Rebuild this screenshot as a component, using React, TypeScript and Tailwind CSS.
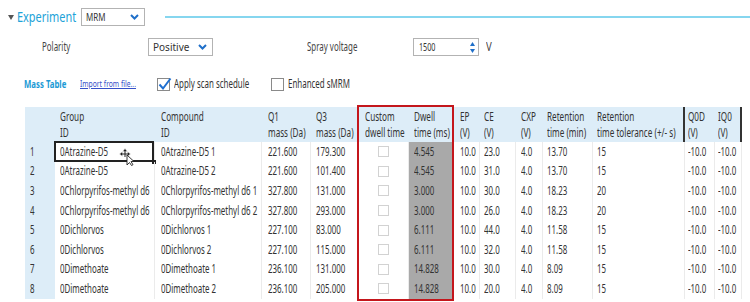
import React from "react";

const FONT = "font-['Noto_Sans','Open_Sans','Liberation_Sans',sans-serif]";

function T({ children, s = "scale-x-[0.66]", className = "" }: { children: React.ReactNode; s?: string; className?: string }) {
  return <span className={`inline-block origin-left whitespace-nowrap ${s} ${className}`}>{children}</span>;
}

function Chevron() {
  return (
    <svg width="9" height="6" viewBox="0 0 9 6" className="shrink-0">
      <path d="M1 1 L4.5 4.5 L8 1" fill="none" stroke="#1f6fc9" strokeWidth="2" />
    </svg>
  );
}

function Select({ children, w }: { children: React.ReactNode; w: string }) {
  return (
    <div className={`${w} shrink-0 h-[18px] border border-[#b3b3b3] bg-white flex items-center justify-between pl-[4px] pr-[5px] text-[10px] text-[#333]`}>
      {children}
      <Chevron />
    </div>
  );
}

function CheckBox({ checked }: { checked?: boolean }) {
  return (
    <div className="relative w-[13px] h-[13px] border border-[#8a8a8a] bg-white shrink-0">
      {checked && (
        <svg width="16" height="16" viewBox="0 0 16 16" className="absolute -left-[1px] -top-[3px]">
          <path d="M2.5 8.5 L6 12.5 L13.5 2.5" fill="none" stroke="#1f6fd0" strokeWidth="2" />
        </svg>
      )}
    </div>
  );
}

type Col = { w: string; h: [string, string]; pl: string; dark?: boolean };

const cols: Col[] = [
  { w: "w-[30px]", h: ["", ""], pl: "pl-[5px]" },
  { w: "w-[100px]", h: ["Group", "ID"], pl: "pl-[5px]" },
  { w: "w-[107px]", h: ["Compound", "ID"], pl: "pl-[6px]" },
  { w: "w-[49px]", h: ["Q1", "mass (Da)"], pl: "pl-[6px]" },
  { w: "w-[47px]", h: ["Q3", "mass (Da)"], pl: "pl-[5px]" },
  { w: "w-[51px]", h: ["Custom", "dwell time"], pl: "pl-[7px]" },
  { w: "w-[44px]", h: ["Dwell", "time (ms)"], pl: "pl-[5px]" },
  { w: "w-[27px]", h: ["EP", "(V)"], pl: "pl-[7px]" },
  { w: "w-[36px]", h: ["CE", "(V)"], pl: "pl-[4px]" },
  { w: "w-[27px]", h: ["CXP", "(V)"], pl: "pl-[5px]" },
  { w: "w-[50px]", h: ["Retention", "time (min)"], pl: "pl-[4px]" },
  { w: "w-[92px]", h: ["Retention", "time tolerance (+/- s)"], pl: "pl-[4px]", dark: true },
  { w: "w-[30px]", h: ["Q0D", "(V)"], pl: "pl-[3px]" },
  { w: "w-[27px]", h: ["IQ0", "(V)"], pl: "pl-[3px]", dark: true },
];

const rows: string[][] = [
  ["1", "0Atrazine-D5", "0Atrazine-D5 1", "221.600", "179.300", "", "4.545", "10.0", "23.0", "4.0", "13.70", "15", "-10.0", "-10.0"],
  ["2", "0Atrazine-D5", "0Atrazine-D5 2", "221.600", "101.400", "", "4.545", "10.0", "31.0", "4.0", "13.70", "15", "-10.0", "-10.0"],
  ["3", "0Chlorpyrifos-methyl d6", "0Chlorpyrifos-methyl d6 1", "327.800", "131.000", "", "3.000", "10.0", "30.0", "4.0", "18.23", "20", "-10.0", "-10.0"],
  ["4", "0Chlorpyrifos-methyl d6", "0Chlorpyrifos-methyl d6 2", "327.800", "293.000", "", "3.000", "10.0", "26.0", "4.0", "18.23", "20", "-10.0", "-10.0"],
  ["5", "0Dichlorvos", "0Dichlorvos 1", "227.100", "83.000", "", "6.111", "10.0", "44.0", "4.0", "11.58", "15", "-10.0", "-10.0"],
  ["6", "0Dichlorvos", "0Dichlorvos 2", "227.100", "115.000", "", "6.111", "10.0", "32.0", "4.0", "11.58", "15", "-10.0", "-10.0"],
  ["7", "0Dimethoate", "0Dimethoate 1", "236.100", "131.000", "", "14.828", "10.0", "30.0", "4.0", "8.09", "15", "-10.0", "-10.0"],
  ["8", "0Dimethoate", "0Dimethoate 2", "236.100", "205.000", "", "14.828", "10.0", "20.0", "4.0", "8.09", "15", "-10.0", "-10.0"],
];

function MoveCursor() {
  return (
    <svg width="18" height="18" viewBox="0 0 18 18" className="absolute left-[64px] top-[6px]">
      <g fill="#222" stroke="#fff" strokeWidth="0.6">
        <path d="M6 0.5 L8.5 3.5 L3.5 3.5 Z" />
        <path d="M0.5 6 L3.5 3.5 L3.5 8.5 Z" />
        <path d="M11.5 6 L8.5 3.5 L8.5 8.5 Z" />
      </g>
      <path d="M6 3 L6 9 M3 6 L9 6" stroke="#222" strokeWidth="1" />
      <path d="M8 7 L8 17 L10.5 14.5 L12.5 17.5 L14 16.7 L12 13.6 L15 13.5 Z" fill="#fff" stroke="#222" strokeWidth="0.9" />
    </svg>
  );
}

export default function App() {
  return (
    <div className={`relative w-[750px] h-[302px] overflow-hidden bg-white text-[#333] ${FONT}`}>
      {/* Experiment row */}
      <div className="flex items-center h-[18px] mt-[8px]">
        <svg width="6" height="5" viewBox="0 0 6 5" className="ml-[8px] shrink-0">
          <path d="M0 0 L6 0 L3 5 Z" fill="#555" />
        </svg>
        <div className="ml-[3px] w-[64px] shrink-0 text-[14px] leading-none text-[#20a2d8]">
          <T s="scale-x-[0.78]">Experiment</T>
        </div>
        <Select w="w-[64px]">
          <T s="scale-x-[0.8]">MRM</T>
        </Select>
        <div className="ml-[20px] flex-1 h-[2px] bg-[#86d6ef]" />
      </div>

      {/* Polarity row */}
      <div className="flex items-center h-[18px] mt-[12px] text-[12px] text-[#444]">
        <div className="ml-[42px] w-[106px] shrink-0">
          <T>Polarity</T>
        </div>
        <Select w="w-[65px]">
          <span>Positive</span>
        </Select>
        <div className="ml-[94px] w-[106px] shrink-0">
          <T>Spray voltage</T>
        </div>
        <div className="w-[66px] shrink-0 h-[18px] border border-[#b3b3b3] flex items-center justify-between pl-[5px] pr-[3px] text-[10px] text-[#333]">
          <T s="scale-x-[0.72]">1500</T>
          <div className="flex flex-col gap-[3px]">
            <svg width="5" height="4" viewBox="0 0 5 4"><path d="M0 4 L2.5 0 L5 4 Z" fill="#1f6fc9" /></svg>
            <svg width="5" height="4" viewBox="0 0 5 4"><path d="M0 0 L2.5 4 L5 0 Z" fill="#1f6fc9" /></svg>
          </div>
        </div>
        <div className="ml-[7px]">
          <T s="scale-x-[0.8]">V</T>
        </div>
      </div>

      {/* Mass table row */}
      <div className="flex items-center h-[14px] mt-[21px]">
        <div className="ml-[24px] w-[56px] shrink-0 text-[10px] font-bold text-[#1b9ad5]">
          <T s="scale-x-[0.78]">Mass Table</T>
        </div>
        <div className="w-[77px] shrink-0 text-[9px] text-[#3650c9]">
          <T s="scale-x-[0.75]" className="underline">Import from file...</T>
        </div>
        <CheckBox checked />
        <div className="ml-[4px] w-[97px] shrink-0 text-[12px] text-[#333]">
          <T>Apply scan schedule</T>
        </div>
        <CheckBox />
        <div className="ml-[4px] text-[12px] text-[#333]">
          <T>Enhanced sMRM</T>
        </div>
      </div>

      {/* Table */}
      <div className="ml-[25px] mt-[16px] w-[717px] text-[12px]">
        <div className="flex h-[35px] bg-[#ddedf8]">
          {cols.map((c, i) => (
            <div
              key={i}
              className={`${c.w} ${c.pl} shrink-0 pt-[2px] leading-[16px] ${c.dark ? "border-r-2 border-[#333]" : ""}`}
            >
              <div className="h-[16px]"><T s="scale-x-[0.68]">{c.h[0]}</T></div>
              <div className="h-[16px]"><T s="scale-x-[0.68]">{c.h[1]}</T></div>
            </div>
          ))}
        </div>
        {rows.map((r, ri) => (
          <div key={ri} className="flex h-[19.6px]">
            {r.map((v, ci) => {
              const c = cols[ci];
              let cls = `${c.w} ${c.pl} shrink-0 flex items-center relative`;
              if (ci === 0) cls += " bg-[#ddedf8]";
              else if (ci === 6) cls += " bg-[#a9a9a9]";
              else cls += " border-r border-[#ebebeb]";
              return (
                <div key={ci} className={cls}>
                  {ci === 5 ? (
                    <div className="w-full flex justify-center pr-[7px]">
                      <div className="w-[11px] h-[11px] border border-[#d2d2d2] bg-white" />
                    </div>
                  ) : (
                    <T>{v}</T>
                  )}
                  {ri === 0 && ci === 1 && (
                    <>
                      <div className="absolute -left-[1px] -top-[1px] right-0 bottom-0 border-2 border-[#222]" />
                      <div className="absolute -right-[2px] -bottom-[2px] w-[4px] h-[4px] bg-[#222]" />
                      <MoveCursor />
                    </>
                  )}
                </div>
              );
            })}
          </div>
        ))}
      </div>

      {/* Highlight box */}
      <div className="absolute left-[357px] top-[105px] w-[97px] h-[196px] border-2 border-[#c4161c]" />
    </div>
  );
}
